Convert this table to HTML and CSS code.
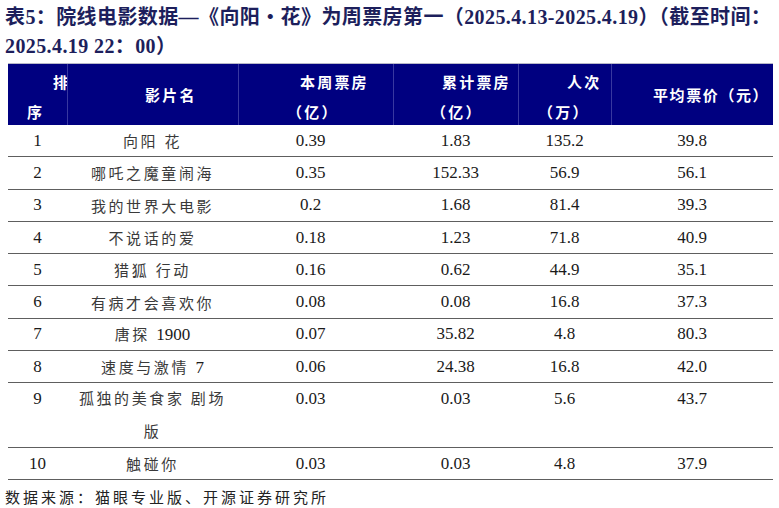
FILE: index.html
```html
<!DOCTYPE html>
<html lang="zh">
<head>
<meta charset="utf-8">
<title>表5</title>
<link rel="stylesheet" href="styles.css">
</head>
<body>
<h1 class="title">表5：院线电影数据—《向阳・花》为周票房第一（2025.4.13-2025.4.19）（截至时间：<br>2025.4.19 22：00）</h1>
<div class="table">
  <div class="row head">
    <div class="hc h1"><span class="l1">排</span><span class="l2">序</span></div>
    <div class="hc h2"><span class="one">影片名</span></div>
    <div class="hc h3"><span class="l1">本周票房</span><span class="l2">（亿）</span></div>
    <div class="hc h4"><span class="l1">累计票房</span><span class="l2">（亿）</span></div>
    <div class="hc h5"><span class="l1">人次</span><span class="l2">（万）</span></div>
    <div class="hc h6"><span class="one">平均票价（元）</span></div>
  </div>
  <div class="row"><div class="c">1</div><div class="c name">向阳 花</div><div class="c wk">0.39</div><div class="c">1.83</div><div class="c">135.2</div><div class="c">39.8</div></div>
  <div class="row"><div class="c">2</div><div class="c name">哪吒之魔童闹海</div><div class="c wk">0.35</div><div class="c">152.33</div><div class="c">56.9</div><div class="c">56.1</div></div>
  <div class="row"><div class="c">3</div><div class="c name">我的世界大电影</div><div class="c wk">0.2</div><div class="c">1.68</div><div class="c">81.4</div><div class="c">39.3</div></div>
  <div class="row"><div class="c">4</div><div class="c name">不说话的爱</div><div class="c wk">0.18</div><div class="c">1.23</div><div class="c">71.8</div><div class="c">40.9</div></div>
  <div class="row"><div class="c">5</div><div class="c name">猎狐 行动</div><div class="c wk">0.16</div><div class="c">0.62</div><div class="c">44.9</div><div class="c">35.1</div></div>
  <div class="row"><div class="c">6</div><div class="c name">有病才会喜欢你</div><div class="c wk">0.08</div><div class="c">0.08</div><div class="c">16.8</div><div class="c">37.3</div></div>
  <div class="row"><div class="c">7</div><div class="c name"><span>唐探 <span class="num">1900</span></span></div><div class="c wk">0.07</div><div class="c">35.82</div><div class="c">4.8</div><div class="c">80.3</div></div>
  <div class="row"><div class="c">8</div><div class="c name"><span>速度与激情 <span class="num">7</span></span></div><div class="c wk">0.06</div><div class="c">24.38</div><div class="c">16.8</div><div class="c">42.0</div></div>
  <div class="row tall"><div class="c">9</div><div class="c name">孤独的美食家 剧场<br>版</div><div class="c wk">0.03</div><div class="c">0.03</div><div class="c">5.6</div><div class="c">43.7</div></div>
  <div class="row"><div class="c">10</div><div class="c name">触碰你</div><div class="c wk">0.03</div><div class="c">0.03</div><div class="c">4.8</div><div class="c">37.9</div></div>
</div>
<p class="source">数据来源：猫眼专业版、开源证券研究所</p>
</body>
</html>
```

FILE: styles.css
```css
html, body {
  margin: 0;
  padding: 0;
  background: #ffffff;
}
body {
  width: 779px;
  height: 508px;
  overflow: hidden;
  font-family: "Liberation Serif", "Noto Sans CJK SC", serif;
  color: #1a1a1a;
}
.title {
  margin: 0;
  padding: 3px 0 0 5px;
  height: 60px;
  box-sizing: border-box;
  font-size: 20px;
  line-height: 29px;
  font-weight: bold;
  color: #1d1f5c;
  letter-spacing: 0.4px;
  white-space: nowrap;
}
.table {
  margin: 3px 0 0 8px;
  width: 765px;
}
.row {
  display: grid;
  grid-template-columns: 59px 171px 155px 125px 93px 162px;
  height: 32.3px;
  box-sizing: border-box;
  border-bottom: 1.5px solid #5e5e5e;
}
.row.tall {
  height: 64.6px;
}
.row.head {
  height: 62px;
  background: #000080;
  border-top: 1px solid #b8b8c8;
  border-bottom: none;
}
.hc {
  overflow: hidden;
  color: #ffffff;
  font-family: "Noto Sans CJK SC", sans-serif;
  font-weight: bold;
  font-size: 15px;
  letter-spacing: 2.2px;
  line-height: 30px;
  white-space: nowrap;
  border-left: 1px solid #3838a0;
}
.hc.h1 {
  border-left: none;
}
.hc .l1, .hc .l2 {
  display: block;
}
.hc .l1 {
  padding-top: 3px;
}
.hc .one {
  display: block;
  padding-top: 16px;
}
.h1 .l1 { padding-left: 45px; }
.h1 .l2 { padding-left: 19px; }
.h2 .one { padding-left: 77px; }
.h3 .l1 { padding-left: 61px; }
.h3 .l2 { padding-left: 48px; }
.h4 .l1 { padding-left: 48px; }
.h4 .l2 { padding-left: 37px; }
.h5 .l1 { padding-left: 48px; }
.h5 .l2 { padding-left: 19px; }
.h6 .one { padding-left: 41px; letter-spacing: 1.6px; }
.c {
  display: flex;
  align-items: center;
  justify-content: center;
  font-size: 17px;
  color: #1a1a1a;
}
.c.name {
  font-size: 15px;
  letter-spacing: 2.6px;
  color: #3a3a3a;
  text-align: center;
}
.c.name .num {
  font-size: 17px;
  letter-spacing: 0;
  color: #1a1a1a;
}
.c.wk {
  padding-right: 10px;
}
.row.tall .c {
  align-items: flex-start;
  line-height: 32.3px;
}
.source {
  margin: 6px 0 0 5px;
  font-family: "Noto Sans CJK SC", sans-serif;
  font-size: 15px;
  letter-spacing: 3px;
  line-height: 22px;
  color: #222222;
}
```
